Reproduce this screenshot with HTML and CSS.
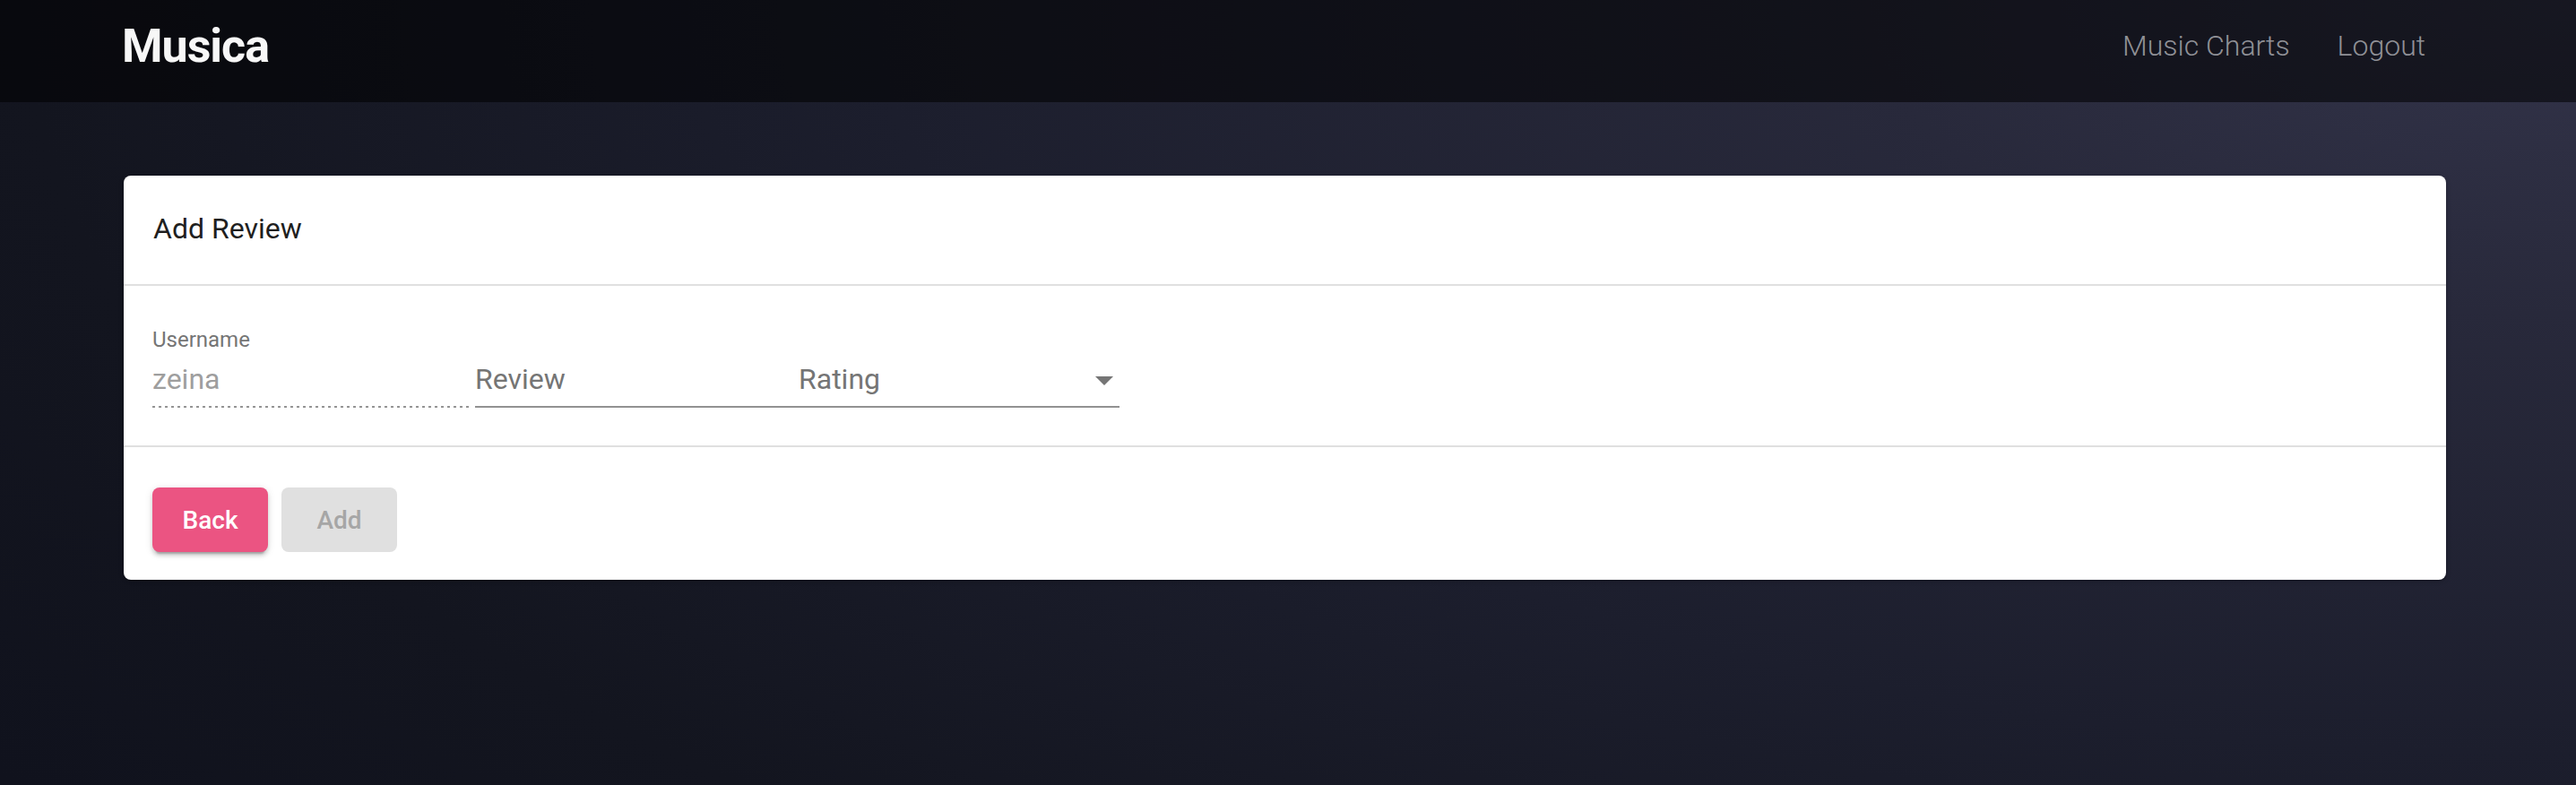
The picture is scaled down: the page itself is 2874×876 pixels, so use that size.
FILE: index.html
```html
<!DOCTYPE html>
<html lang="en">
<head>
<meta charset="utf-8">
<title>Musica</title>
<link rel="stylesheet" href="styles.css">
</head>
<body>
<header class="topbar">
  <div class="logo">Musica</div>
  <nav class="nav">
    <a class="nav-link">Music Charts</a>
    <a class="nav-link">Logout</a>
  </nav>
</header>
<main class="main">
  <section class="card">
    <div class="card-header">Add Review</div>
    <div class="divider"></div>
    <div class="card-content">
      <div class="field field-user">
        <div class="field-label">Username</div>
        <div class="field-input disabled">zeina</div>
        <div class="underline dotted"></div>
      </div>
      <div class="field field-review">
        <div class="field-input placeholder">Review</div>
        <div class="underline"></div>
      </div>
      <div class="field field-rating">
        <div class="field-input placeholder select">
          <span>Rating</span>
          <svg class="arrow" width="20" height="10" viewBox="0 0 20 10"><polygon points="0,0 20,0 10,10" fill="#757575"/></svg>
        </div>
        <div class="underline"></div>
      </div>
    </div>
    <div class="divider"></div>
    <div class="card-actions">
      <button class="btn btn-primary">Back</button>
      <button class="btn btn-disabled" disabled>Add</button>
    </div>
  </section>
</main>
</body>
</html>
```
FILE: styles.css
```css
html, body {
  margin: 0;
  padding: 0;
}
body {
  min-height: 876px;
  font-family: "Roboto", "Liberation Sans", sans-serif;
  background: radial-gradient(ellipse 110% 160% at 100% 0%, #33344a 0%, #28293b 25%, #1c1e2d 60%, #13151f 90%, #10121d 110%);
}
.topbar {
  height: 114px;
  box-sizing: border-box;
  display: flex;
  justify-content: space-between;
  align-items: flex-start;
  padding: 0 168px 0 136px;
  background: rgba(0, 0, 0, 0.55);
}
.logo {
  padding-top: 22px;
  font-size: 52px;
  line-height: 60px;
  font-weight: 700;
  color: #f7f7f7;
  letter-spacing: -1px;
}
.nav {
  display: flex;
  gap: 53px;
  padding-top: 31px;
}
.nav-link {
  font-size: 32px;
  line-height: 40px;
  font-weight: 300;
  color: #8f9096;
}
.main {
  padding: 82px 145px 0 138px;
}
.card {
  background: #fff;
  border-radius: 8px;
  box-shadow: 0 2px 2px rgba(0,0,0,0.14), 0 1px 6px rgba(0,0,0,0.12);
}
.card-header {
  padding: 39px 33px 42px;
  font-size: 32px;
  line-height: 40px;
  color: #1f1f1f;
}
.divider {
  height: 2px;
  background: #e0e0e0;
}
.card-content {
  display: flex;
  align-items: flex-end;
  padding: 46px 32px 42px;
}
.field {
  display: flex;
  flex-direction: column;
}
.field-user { width: 356px; margin-right: 4px; }
.field-review { width: 361px; }
.field-rating { width: 358px; }
.field-label {
  font-size: 24px;
  line-height: 28px;
  color: #757575;
  margin-bottom: 10px;
}
.field-input {
  font-size: 32px;
  line-height: 40px;
  padding-bottom: 10px;
}
.field-input.disabled { color: #9e9e9e; }
.field-input.placeholder { color: #757575; }
.field-input.select {
  display: flex;
  justify-content: space-between;
  align-items: center;
}
.arrow {
  margin-right: 7px;
  margin-top: 4px;
}
.underline {
  height: 2px;
  background: #919191;
}
.underline.dotted {
  background: repeating-linear-gradient(90deg, #949494 0 3px, transparent 3px 7px);
}
.card-actions {
  display: flex;
  gap: 15px;
  padding: 45px 32px 31px;
}
.btn {
  width: 129px;
  height: 72px;
  border: none;
  border-radius: 8px;
  font-family: "Roboto", "Liberation Sans", sans-serif;
  font-size: 28px;
  font-weight: 500;
  display: flex;
  align-items: center;
  justify-content: center;
  padding: 0;
}
.btn-primary {
  background: #eb5482;
  color: #fff;
  box-shadow: 0 6px 2px -4px rgba(0,0,0,0.2), 0 4px 4px 0 rgba(0,0,0,0.14), 0 2px 10px 0 rgba(0,0,0,0.12);
}
.btn-disabled {
  background: #e0e0e0;
  color: #a6a6a6;
}
```
